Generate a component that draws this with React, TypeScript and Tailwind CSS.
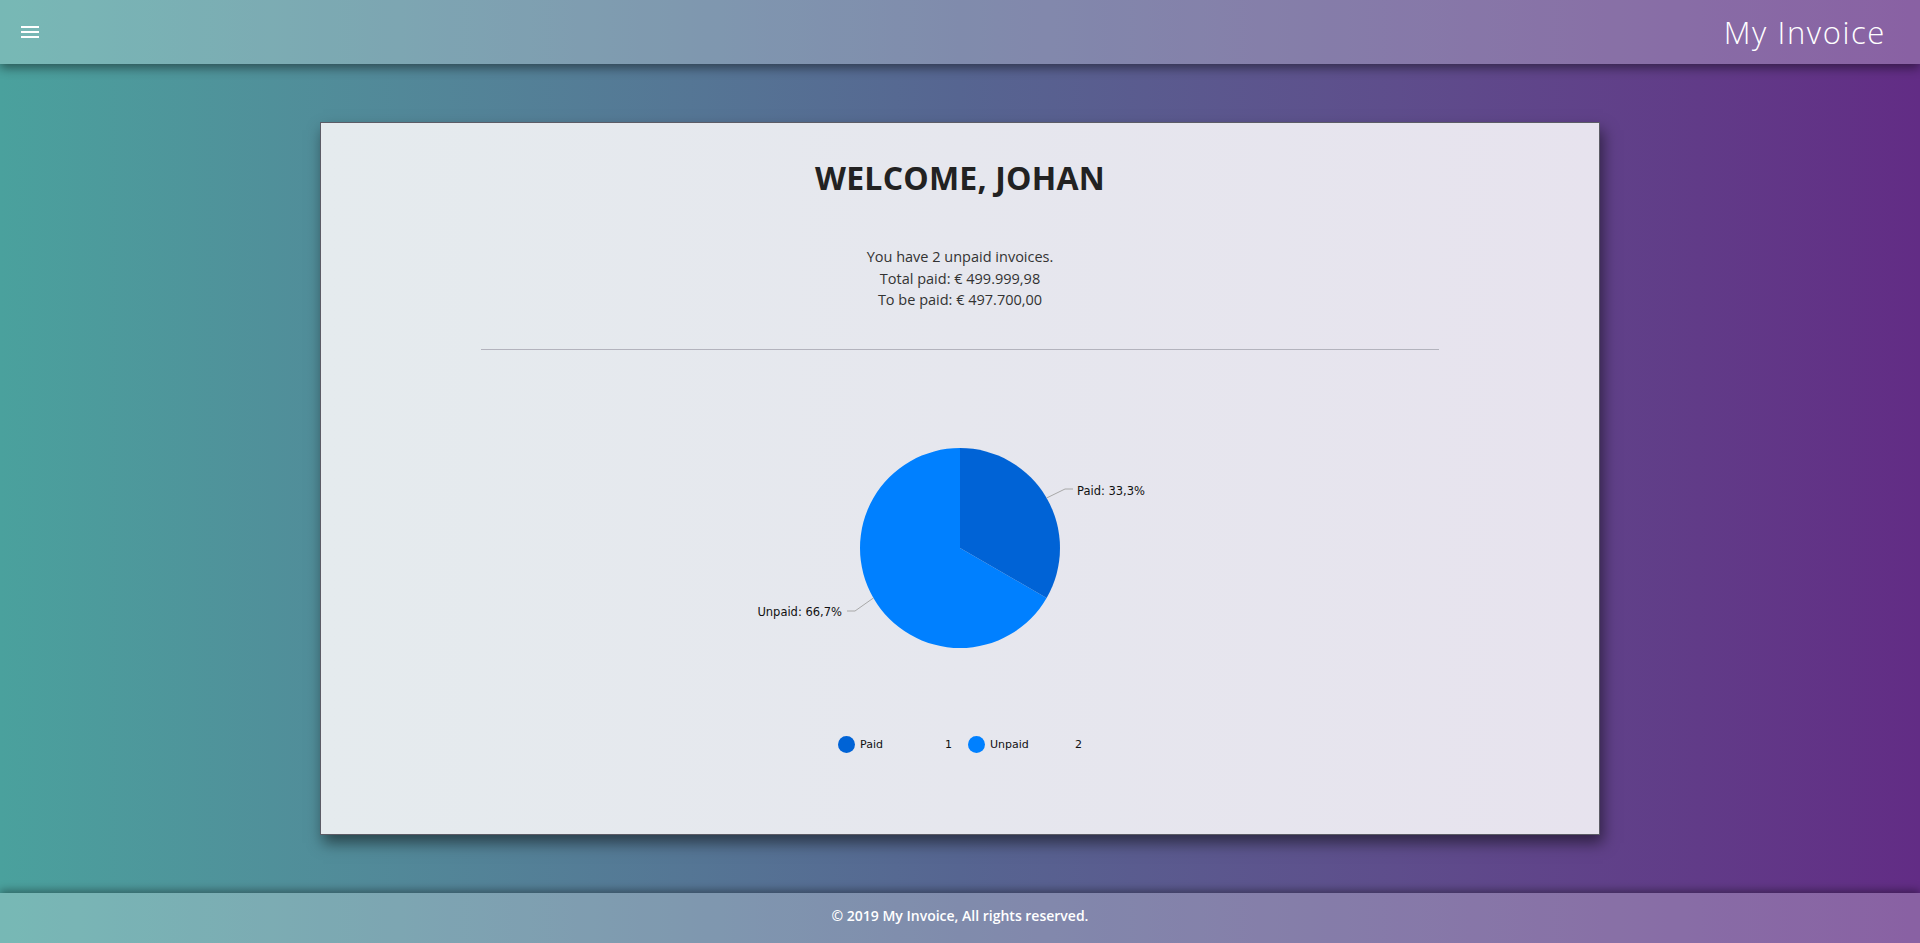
import * as React from 'react'

const paid = 1
const unpaid = 2

function MenuIcon() {
  return (
    <svg width="24" height="24" viewBox="0 0 24 24" fill="white" aria-hidden="true">
      <path d="M3 18h18v-2H3v2zm0-5h18v-2H3v2zm0-7v2h18V6H3z" />
    </svg>
  )
}

// pie drawn by hand, center at (240,120)
function PieChart() {
  const cx = 240
  const cy = 120
  const r = 100
  const total = paid + unpaid
  const angle = (paid / total) * Math.PI * 2
  const ex = cx + r * Math.sin(angle)
  const ey = cy - r * Math.cos(angle)

  return (
    <svg width="480" height="240" viewBox="0 0 480 240" className="block">
      <path d={`M${cx} ${cy} L${cx} ${cy - r} A${r} ${r} 0 1 0 ${ex} ${ey} Z`} fill="#0080ff" />
      <path d={`M${cx} ${cy} L${cx} ${cy - r} A${r} ${r} 0 0 1 ${ex} ${ey} Z`} fill="#0063d6" />
      <polyline points="326.6,70 345,61 353,61" fill="none" stroke="#a8a8a8" strokeWidth="1" />
      <polyline points="153.4,170 135,183 127,183" fill="none" stroke="#a8a8a8" strokeWidth="1" />
      <text x="357" y="67" fontSize="11.5" fontFamily="'DejaVu Sans', Verdana, sans-serif" fill="#111">
        Paid: 33,3%
      </text>
      <text x="122" y="188" textAnchor="end" fontSize="11.5" fontFamily="'DejaVu Sans', Verdana, sans-serif" fill="#111">
        Unpaid: 66,7%
      </text>
    </svg>
  )
}

function LegendItem({ color, label, value }: { color: string; label: string; value: number }) {
  return (
    <div className="flex w-[114px] items-center">
      <span className="h-[17px] w-[17px] rounded-full" style={{ backgroundColor: color }} />
      <span className="ml-[5px] flex-1">{label}</span>
      <span>{value}</span>
    </div>
  )
}

export default function App() {
  return (
    <div className="flex h-screen flex-col bg-linear-to-r from-[#4aa19d] via-[#566591] to-[#622c85] font-['Open_Sans',sans-serif]">
      <header className="relative z-10 flex h-16 shrink-0 items-center justify-between bg-white/25 pl-[18px] pr-[34px] shadow-[0_4px_10px_rgba(0,0,0,0.45)]">
        <button type="button" aria-label="Menu" className="flex h-6 w-6 items-center justify-center">
          <MenuIcon />
        </button>
        <h1 className="font-['Open_Sans',sans-serif] text-[31px] font-light tracking-[1.6px] text-white">My Invoice</h1>
      </header>

      <main className="flex flex-1 items-center justify-center">
        <section className="flex h-[713px] w-[1280px] flex-col items-center border border-[#5c5c66] bg-linear-to-r from-[#e5ebee] to-[#e7e3ee] pt-[35px] shadow-[3px_8px_14px_rgba(0,0,0,0.5)]">
          <h2 className="text-[32px] font-bold leading-[40px] tracking-[0.2px] text-[#222]">WELCOME, JOHAN</h2>
          <div className="mt-[48px] text-center text-[14.5px] leading-[21.5px] text-[#333]">
            <p>You have 2 unpaid invoices.</p>
            <p>Total paid: € 499.999,98</p>
            <p>To be paid: € 497.700,00</p>
          </div>
          <hr className="mt-[38px] w-[958px] border-t border-[#b3b3bd]" />
          <div className="mt-[78px]">
            <PieChart />
          </div>
          <div className="mt-[68px] flex gap-4 font-['DejaVu_Sans',sans-serif] text-[11px] leading-[17px] text-[#111]">
            <LegendItem color="#0063d6" label="Paid" value={paid} />
            <LegendItem color="#0080ff" label="Unpaid" value={unpaid} />
          </div>
        </section>
      </main>

      <footer className="relative flex h-[50px] shrink-0 items-center justify-center bg-white/25 pb-[5px] shadow-[0_-3px_8px_rgba(0,0,0,0.35)]">
        <p className="text-[14px] font-semibold text-white">© 2019 My Invoice, All rights reserved.</p>
      </footer>
    </div>
  )
}
